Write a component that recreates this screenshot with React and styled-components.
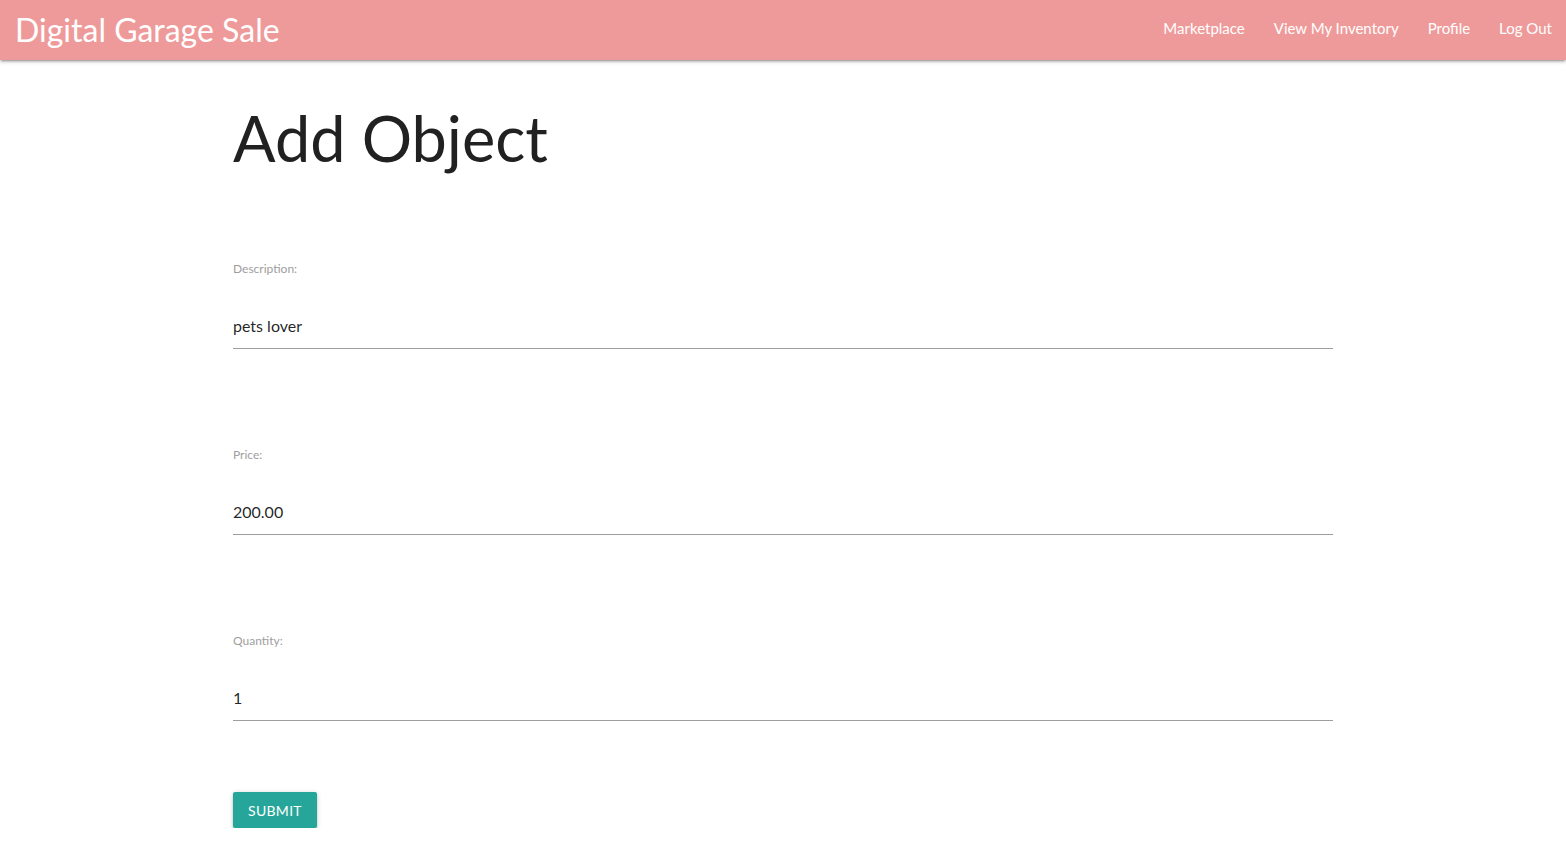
import React from "react";
import styled, { createGlobalStyle } from "styled-components";

const Global = createGlobalStyle`
  body {
    margin: 0;
    font-family: Lato, "Open Sans", sans-serif;
    background: #fff;
    color: rgba(0, 0, 0, 0.87);
  }
  * { box-sizing: border-box; }
`;

const Nav = styled.nav`
  height: 60px;
  background: #ef9a9a;
  box-shadow: 0 2px 2px 0 rgba(0,0,0,0.14), 0 3px 1px -2px rgba(0,0,0,0.12), 0 1px 5px 0 rgba(0,0,0,0.2);
  display: flex;
  align-items: center;
  justify-content: space-between;
  padding-left: 15px;
`;

const Brand = styled.a`
  color: #fff;
  font-size: 32px;
  text-decoration: none;
  line-height: 58px;
`;

const Links = styled.ul`
  display: flex;
  list-style: none;
  margin: 0;
  padding: 0;
  height: 100%;
`;

const LinkItem = styled.li`
  a {
    display: block;
    padding: 0 14px 0 15px;
    line-height: 56px;
    color: #fff;
    font-size: 15px;
    text-decoration: none;
  }
`;

const Container = styled.main`
  width: 1100px;
  margin: 0 auto;
`;

const Title = styled.h2`
  font-size: 63px;
  font-weight: 400;
  color: #212121;
  margin: 0;
  padding-top: 43px;
  line-height: 70px;
  margin-bottom: 89px;
`;

const Form = styled.form`
  display: flex;
  flex-direction: column;
  gap: 99px;
`;

const Field = styled.div`
  display: flex;
  flex-direction: column;
`;

const Label = styled.label`
  font-size: 12px;
  line-height: 14px;
  color: #9e9e9e;
  margin-bottom: 27px;
`;

const Input = styled.input`
  height: 46px;
  border: none;
  border-bottom: 1px solid #9e9e9e;
  outline: none;
  padding: 0;
  font-family: inherit;
  font-size: 16px;
  color: rgba(0, 0, 0, 0.87);
  background: transparent;
`;

const Submit = styled.button`
  align-self: flex-start;
  margin-top: 71px;
  height: 36px;
  padding: 0 15px;
  background: #26a69a;
  color: #fff;
  border: none;
  border-radius: 2px;
  font-family: inherit;
  font-size: 14px;
  letter-spacing: 0.3px;
  text-transform: uppercase;
  box-shadow: 0 2px 2px 0 rgba(0,0,0,0.14), 0 3px 1px -2px rgba(0,0,0,0.12), 0 1px 5px 0 rgba(0,0,0,0.2);
  cursor: pointer;
`;

const fields = [
  { id: "description", label: "Description:", value: "pets lover" },
  { id: "price", label: "Price:", value: "200.00" },
  { id: "quantity", label: "Quantity:", value: "1" },
];

export default function App() {
  return (
    <>
      <Global />
      <Nav>
        <Brand href="#">Digital Garage Sale</Brand>
        <Links>
          {["Marketplace", "View My Inventory", "Profile", "Log Out"].map((l) => (
            <LinkItem key={l}>
              <a href="#">{l}</a>
            </LinkItem>
          ))}
        </Links>
      </Nav>
      <Container>
        <Title>Add Object</Title>
        <Form onSubmit={(e) => e.preventDefault()}>
          {fields.map((f) => (
            <Field key={f.id}>
              <Label htmlFor={f.id}>{f.label}</Label>
              <Input id={f.id} defaultValue={f.value} />
            </Field>
          ))}
        </Form>
        <Submit type="submit">Submit</Submit>
      </Container>
    </>
  );
}
